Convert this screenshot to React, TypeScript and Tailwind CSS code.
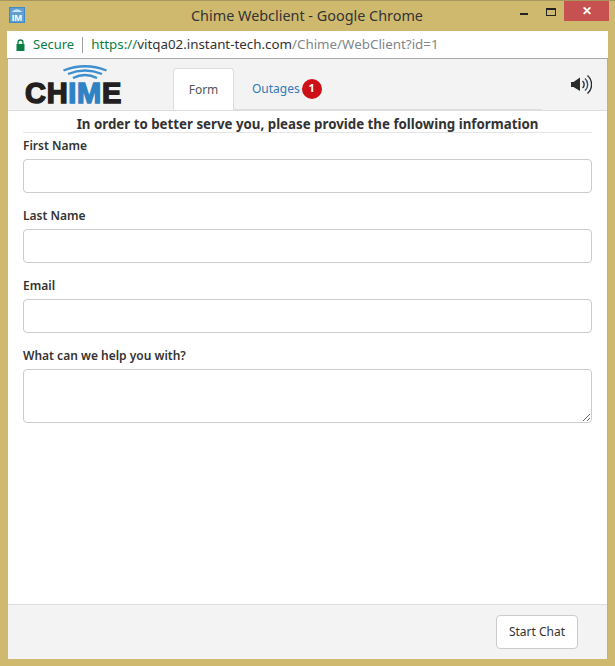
import React from 'react';

const fieldClass =
  'block w-full h-[34px] rounded-[4px] border border-[#cccccc] bg-white px-3 outline-none';

const Field: React.FC<{ label: string }> = ({ label }) => (
  <div className="mb-[10px]">
    <label className="block h-[26px] text-[12px] font-semibold leading-[26px] text-[#333333]">{label}</label>
    <input className={fieldClass} />
  </div>
);

const AppIcon = () => (
  <svg width="16" height="16" viewBox="0 0 16 16">
    <rect width="16" height="16" fill="#3f8ac8" />
    <rect x="1" y="1" width="14" height="14" fill="#5f9fd2" />
    <path d="M2.5 5 Q8 -0.5 13.5 5 Z" fill="#cfe2f1" />
    <text x="8" y="14" textAnchor="middle" fontFamily="Liberation Sans, sans-serif" fontWeight="700" fontSize="9.5" fill="#ffffff">IM</text>
  </svg>
);

const LockIcon = () => (
  <svg width="9" height="12" viewBox="0 0 9 12" fill="none">
    <rect x="0.5" y="5" width="8" height="7" fill="#0b8043" />
    <path d="M2 5.5V3.5a2.5 2.5 0 0 1 5 0v2" stroke="#0b8043" strokeWidth="1.3" />
  </svg>
);

const Speaker = () => (
  <svg width="21" height="21" viewBox="0 0 21 21" fill="none">
    <path d="M0 8h2.5L9 3.5v13.5L2.5 13H0z" fill="#2b2b2b" />
    <path d="M11.5 7a4.5 4.5 0 0 1 0 7" stroke="#2b2b2b" strokeWidth="1.4" />
    <path d="M14 4.5a8 8 0 0 1 0 12" stroke="#2a4f78" strokeWidth="1.4" />
    <path d="M16.5 1.5a12 12 0 0 1 0 18" stroke="#2b2b2b" strokeWidth="1.4" />
  </svg>
);

const Logo = () => (
  <div className="w-[100px]">
    <svg width="44" height="14" viewBox="0 0 44 14" fill="none" className="ml-[39px] block" stroke="#3d8fcf" strokeWidth="2.4">
      <path d="M0.5 5.5 Q22 -3 43.5 5.5" />
      <path d="M5 9 Q22 2 39 9" />
      <path d="M10 13 Q22 7 34 13" />
    </svg>
    <div className="mt-[2px] ml-[1px] font-['Liberation_Sans',sans-serif] text-[29px] font-bold leading-[24px] tracking-[0.7px] text-[#231f20] [-webkit-text-stroke:1.5px_currentColor]">
      CH<span className="text-[#2f83c5]">IM</span>E
    </div>
  </div>
);

export default function App() {
  return (
    <div className="flex h-[666px] w-[615px] flex-col overflow-hidden bg-[#cfb96f] font-['Noto_Sans',sans-serif]">
      {/* window title bar */}
      <div className="flex h-[31px] shrink-0 border-t border-[#a8975c] pl-[9px] pr-[6px]">
        <div className="pt-[6px]"><AppIcon /></div>
        <div className="flex-1 pl-[72px] pt-[5px] text-center text-[14.4px] leading-[20px] text-[#333333]">
          Chime Webclient - Google Chrome
        </div>
        <div className="flex h-[20px] w-[92px] shrink-0 items-start">
          <div className="mt-[12px] ml-[3px] h-[2px] w-[8px] bg-[#222222]" />
          <div className="mt-[7px] ml-[18px] h-[8px] w-[10px] border border-t-2 border-[#222222]" />
          <div className="ml-[8px] flex h-[20px] w-[45px] items-center justify-center bg-[#c75050] text-[12px] font-bold text-white">✕</div>
        </div>
      </div>

      {/* address bar */}
      <div className="mx-[7px] flex h-[28px] shrink-0 items-center border-b border-[#a8a8a8] bg-white pl-[9px] text-[13.35px]">
        <LockIcon />
        <span className="ml-[8px] text-[13px] text-[#0b8043]">Secure</span>
        <span className="mx-[8px] h-[16px] w-[1px] bg-[#a0a0a0]" />
        <span className="text-[#0b8043]">https://</span>
        <span className="text-[#333333]">vitqa02.instant-tech.com</span>
        <span className="text-[#80868b]">/Chime/WebClient?id=1</span>
      </div>

      {/* page */}
      <div className="ml-[8px] mr-[7px] flex min-h-0 flex-1 flex-col border-r border-[#b0b0b0] bg-white">
        <div className="flex h-[52px] shrink-0 border-b border-[#dddddd] bg-[#f3f3f3]">
          <div className="ml-[16px] pt-[6px]"><Logo /></div>
          <div className="ml-[49px] flex h-[51px] w-[369px] items-end border-b border-[#dddddd] pt-[9px]">
            <div className="-mb-[1px] flex h-[42px] w-[61px] items-center justify-center rounded-t-[4px] border border-b-0 border-[#dddddd] bg-white text-[12px] text-[#555555]">
              Form
            </div>
            <div className="flex h-[41px] items-center pl-[18px] text-[12px] text-[#337ab7]">
              Outages
              <span className="ml-[2px] flex h-[20px] w-[20px] items-center justify-center rounded-full bg-[#cd1018] text-[11px] font-bold text-white">1</span>
            </div>
          </div>
          <div className="ml-[29px] pt-[15px]"><Speaker /></div>
        </div>

        <div className="flex min-h-0 flex-1 flex-col px-[15px]">
          <h1 className="h-[22px] border-b border-[#e5e5e5] text-center text-[13.3px] font-bold leading-[26px] text-[#333333]">
            In order to better serve you, please provide the following information
          </h1>
          <div>
            <Field label="First Name" />
            <Field label="Last Name" />
            <Field label="Email" />
            <label className="block h-[26px] text-[12px] font-semibold leading-[26px] text-[#333333]">What can we help you with?</label>
            <textarea className="block h-[54px] w-full rounded-[4px] border border-[#cccccc] bg-white px-3 outline-none" />
          </div>
        </div>

        <div className="flex h-[55px] shrink-0 items-start justify-end border-t border-[#dddddd] bg-[#f3f3f3] pr-[29px] pt-[10px]">
          <button className="h-[34px] w-[82px] rounded-[4px] border border-[#cccccc] bg-white text-[12px] text-[#333333]">
            Start Chat
          </button>
        </div>
      </div>
      <div className="h-[7px] shrink-0" />
    </div>
  );
}
